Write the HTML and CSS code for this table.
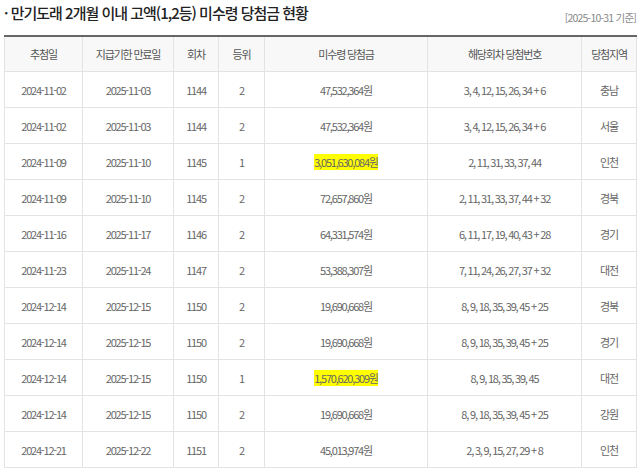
FILE: index.html
```html
<!DOCTYPE html>
<html lang="ko">
<head>
<meta charset="utf-8">
<link rel="stylesheet" href="styles.css">
</head>
<body>
<div class="page">
  <div class="head">
    <h2 class="title">· 만기도래 2개월 이내 고액(1,2등) 미수령 당첨금 현황</h2>
    <span class="basis">[2025-10-31 기준]</span>
  </div>
  <table class="grid">
    <colgroup>
      <col class="c-date"><col class="c-exp"><col class="c-round"><col class="c-rank"><col class="c-amt"><col class="c-nums"><col class="c-area">
    </colgroup>
    <thead>
      <tr><th>추첨일</th><th>지급기한 만료일</th><th>회차</th><th>등위</th><th>미수령 당첨금</th><th>해당회차 당첨번호</th><th>당첨지역</th></tr>
    </thead>
    <tbody>
      <tr><td>2024-11-02</td><td>2025-11-03</td><td>1144</td><td>2</td><td>47,532,364원</td><td>3, 4, 12, 15, 26, 34 + 6</td><td>충남</td></tr>
      <tr><td>2024-11-02</td><td>2025-11-03</td><td>1144</td><td>2</td><td>47,532,364원</td><td>3, 4, 12, 15, 26, 34 + 6</td><td>서울</td></tr>
      <tr><td>2024-11-09</td><td>2025-11-10</td><td>1145</td><td>1</td><td><span class="hl">3,051,630,084원</span></td><td>2, 11, 31, 33, 37, 44</td><td>인천</td></tr>
      <tr><td>2024-11-09</td><td>2025-11-10</td><td>1145</td><td>2</td><td>72,657,860원</td><td>2, 11, 31, 33, 37, 44 + 32</td><td>경북</td></tr>
      <tr><td>2024-11-16</td><td>2025-11-17</td><td>1146</td><td>2</td><td>64,331,574원</td><td>6, 11, 17, 19, 40, 43 + 28</td><td>경기</td></tr>
      <tr><td>2024-11-23</td><td>2025-11-24</td><td>1147</td><td>2</td><td>53,388,307원</td><td>7, 11, 24, 26, 27, 37 + 32</td><td>대전</td></tr>
      <tr><td>2024-12-14</td><td>2025-12-15</td><td>1150</td><td>2</td><td>19,690,668원</td><td>8, 9, 18, 35, 39, 45 + 25</td><td>경북</td></tr>
      <tr><td>2024-12-14</td><td>2025-12-15</td><td>1150</td><td>2</td><td>19,690,668원</td><td>8, 9, 18, 35, 39, 45 + 25</td><td>경기</td></tr>
      <tr><td>2024-12-14</td><td>2025-12-15</td><td>1150</td><td>1</td><td><span class="hl">1,570,620,309원</span></td><td>8, 9, 18, 35, 39, 45</td><td>대전</td></tr>
      <tr><td>2024-12-14</td><td>2025-12-15</td><td>1150</td><td>2</td><td>19,690,668원</td><td>8, 9, 18, 35, 39, 45 + 25</td><td>강원</td></tr>
      <tr><td>2024-12-21</td><td>2025-12-22</td><td>1151</td><td>2</td><td>45,013,974원</td><td>2, 3, 9, 15, 27, 29 + 8</td><td>인천</td></tr>
    </tbody>
  </table>
</div>
</body>
</html>
```

FILE: styles.css
```css
html, body {
  margin: 0;
  padding: 0;
  background: #fff;
}
body {
  font-family: "Noto Sans CJK KR", "Noto Sans", sans-serif;
  color: #666;
}
.page {
  padding: 0 4px;
}
.head {
  display: flex;
  justify-content: space-between;
  align-items: flex-end;
  height: 27px;
  margin-bottom: 8px;
}
.title {
  margin: 0;
  font-size: 15px;
  font-weight: 500;
  color: #222;
  letter-spacing: -1px;
  line-height: 22px;
  padding-bottom: 3px;
}
.basis {
  font-size: 10.5px;
  color: #888;
  letter-spacing: -0.8px;
  line-height: 14px;
  padding-bottom: 2px;
}
.grid {
  width: 632px;
  border-collapse: collapse;
  table-layout: fixed;
  border-top: 2px solid #666;
}
.c-date { width: 78px; }
.c-exp { width: 91px; }
.c-round { width: 45px; }
.c-rank { width: 46px; }
.c-amt { width: 163px; }
.c-nums { width: 154px; }
.c-area { width: 55px; }
.grid th, .grid td {
  border: 1px solid #e3e3e3;
  text-align: center;
  font-size: 11px;
  letter-spacing: -1.2px;
  font-weight: 400;
  color: #666;
  padding: 0;
  white-space: nowrap;
}
.grid th {
  height: 34px;
  background: #f8f8f8;
  color: #555;
}
.grid td {
  height: 35px;
}
.grid th:first-child, .grid td:first-child {
  border-left: 1px solid #e3e3e3;
}
.hl {
  background: #ffff00;
}
```
